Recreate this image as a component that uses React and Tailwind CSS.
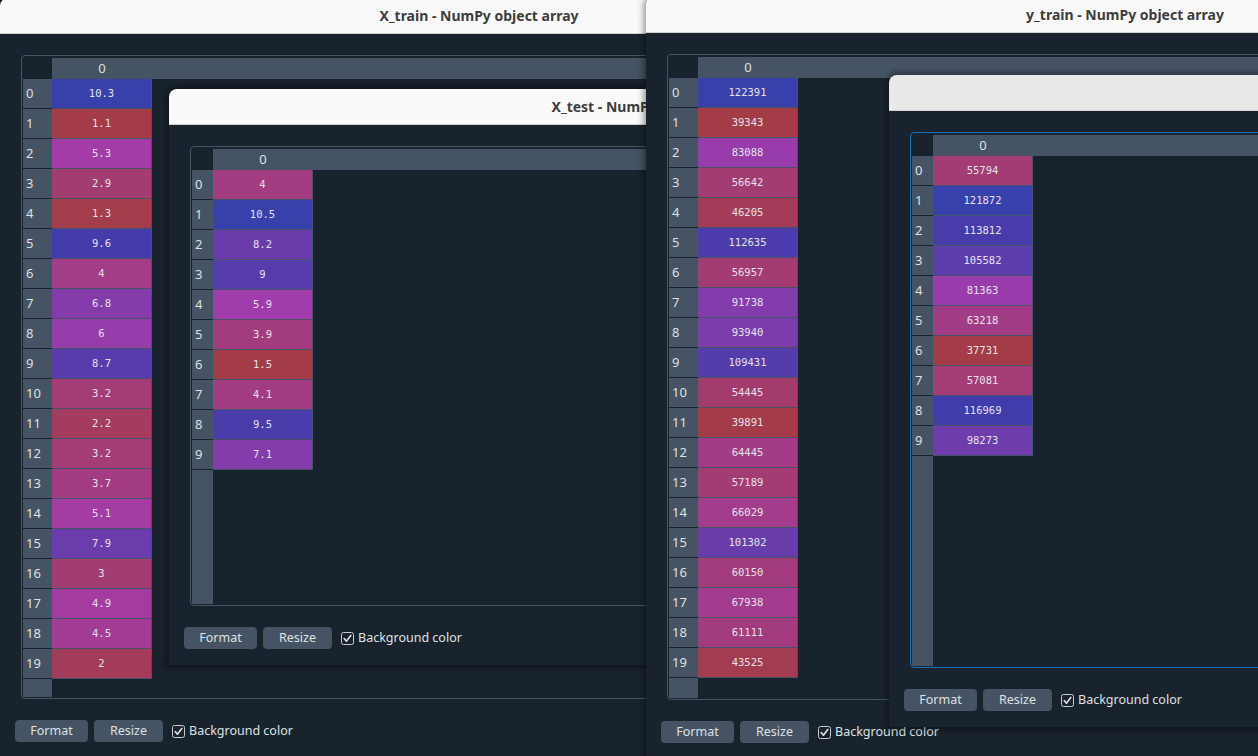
import React from 'react'

const xTrain = [10.3, 1.1, 5.3, 2.9, 1.3, 9.6, 4, 6.8, 6, 8.7, 3.2, 2.2, 3.2, 3.7, 5.1, 7.9, 3, 4.9, 4.5, 2]
const xTest = [4, 10.5, 8.2, 9, 5.9, 3.9, 1.5, 4.1, 9.5, 7.1]
const yTrain = [
  122391, 39343, 83088, 56642, 46205, 112635, 56957, 91738, 93940, 109431,
  54445, 39891, 64445, 57189, 66029, 101302, 60150, 67938, 61111, 43525,
]
const yTest = [55794, 121872, 113812, 105582, 81363, 63218, 37731, 57081, 116969, 98273]

// hue goes from blue (max) to red (min), like the array editor's colormap
function cellColor(v, vmin, vmax) {
  const hue = (0.66 + 0.33 * (vmax - v) / (vmax - vmin)) * 360
  return `hsla(${hue.toFixed(1)}, 100%, 65%, 0.6)`
}

function CheckBox() {
  return (
    <svg width="13" height="13" viewBox="0 0 13 13" className="shrink-0">
      <rect x="0.5" y="0.5" width="12" height="12" rx="2" fill="none" stroke="#c9cdd1" />
      <path d="M3.2 6.6 L5.4 9.2 L9.8 3.4" fill="none" stroke="#e2e4e6" strokeWidth="1.6" strokeLinecap="round" strokeLinejoin="round" />
    </svg>
  )
}

function ArrayTable({ data, idxW, focused }) {
  const vmin = Math.min(...data)
  const vmax = Math.max(...data)
  return (
    <div
      className={`flex-1 min-h-0 mx-[21px] rounded-[4px] border pt-[2px] pl-[1px] pr-[1px] pb-[1px] flex flex-col ${
        focused ? 'border-[#1a72bb]' : 'border-[#455364]'
      }`}
    >
      <div className="flex h-[21px] shrink-0">
        <div style={{ width: idxW }} className="shrink-0 bg-[#19232d]" />
        <div className="flex-1 bg-[#455364] flex items-center">
          <div className="w-[100px] text-center text-[13px] text-[#dfe1e2]">0</div>
        </div>
      </div>
      <div className="flex flex-1 min-h-0">
        <div style={{ width: idxW }} className="shrink-0 flex flex-col bg-[#455364]">
          {data.map((_, i) => (
            <div key={i} className="h-[30px] shrink-0 border-b border-[#19232d] flex items-center pl-[3px] text-[13px] text-[#dfe1e2]">
              {i}
            </div>
          ))}
          <div className="flex-1" />
        </div>
        <div className="w-[100px] shrink-0 self-start border-r border-[#455364]">
          {data.map((v, i) => (
            <div
              key={i}
              style={{ backgroundColor: cellColor(v, vmin, vmax) }}
              className="h-[30px] border-b border-[#455364] flex items-center justify-center font-['DejaVu_Sans_Mono',monospace] text-[10.5px] text-[#e4e2ea]"
            >
              {String(v)}
            </div>
          ))}
        </div>
        <div className="flex-1" />
      </div>
    </div>
  )
}

function ArrayWindow({ title, data, idxW, focused, inactive, className }) {
  return (
    <div className={`absolute w-[958px] flex flex-col rounded-t-[8px] overflow-hidden shadow-[0_0_7px_2px_rgba(0,0,0,0.45)] ${className}`}>
      <div
        className={`h-[36px] shrink-0 border-b border-[#d2d2d2] flex items-center justify-center text-[14px] font-bold text-[#3d3d3d] ${
          inactive ? 'bg-[#e9e9e9]' : 'bg-[#fafafa]'
        }`}
      >
        {title}
      </div>
      <div className="flex-1 min-h-0 bg-[#19232d] flex flex-col pt-[21px] pb-[16px]">
        <ArrayTable data={data} idxW={idxW} focused={focused} />
        <div className="mt-[21px] h-[22px] shrink-0 pl-[15px] flex items-center text-[12.5px] text-[#dfe1e2]">
          <button className="w-[73px] h-[22px] rounded-[4px] bg-[#455364]">Format</button>
          <button className="ml-[6px] w-[69px] h-[22px] rounded-[4px] bg-[#455364]">Resize</button>
          <div className="ml-[9px] flex items-center gap-[4px]">
            <CheckBox />
            <span>Background color</span>
          </div>
        </div>
      </div>
    </div>
  )
}

export default function App() {
  return (
    <div className="relative w-[1258px] h-[756px] overflow-hidden bg-[#19232d] font-['Noto_Sans',sans-serif]">
      <ArrayWindow title="X_train - NumPy object array" data={xTrain} idxW={29} className="left-0 top-[-2px] h-[760px] z-[1]" />
      <ArrayWindow title="X_test - NumPy object array" data={xTest} idxW={21} className="left-[169px] top-[89px] h-[576px] z-[2]" />
      <ArrayWindow title="y_train - NumPy object array" data={yTrain} idxW={29} className="left-[646px] top-[-3px] h-[762px] z-[3]" />
      <ArrayWindow title="y_test - NumPy object array" data={yTest} idxW={21} focused inactive className="left-[889px] top-[75px] h-[652px] z-[4]" />
    </div>
  )
}
